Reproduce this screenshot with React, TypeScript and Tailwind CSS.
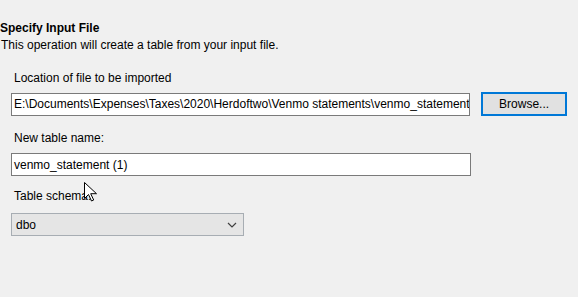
export default function App() {
  return (
    <div className="relative h-[297px] w-[578px] overflow-hidden bg-[#f0f0f0] text-[12px] leading-[16px] text-black [font-family:'Segoe_UI','Liberation_Sans',sans-serif]">
      <div className="pt-[20px]">
        <h2 className="font-bold">Specify Input File</h2>
        <p className="mt-[1px] pl-px">This operation will create a table from your input file.</p>
      </div>

      <div className="mt-[17px] px-[11px]">
        <label className="block pl-[3px]">Location of file to be imported</label>
        <div className="mt-[6px] flex items-center gap-[11px]">
          <div className="flex h-[23px] w-[460px] items-center overflow-hidden whitespace-nowrap border border-[#7a7a7a] bg-white pl-[2px]">
            <span className="shrink-0">E:\Documents\Expenses\Taxes\2020\Herdoftwo\Venmo statements\venmo_statement</span>
          </div>
          <button
            type="button"
            className="h-[24px] w-[86px] border-2 border-[#0078d7] bg-[#e1e1e1] text-center"
          >
            Browse...
          </button>
        </div>

        <label className="mt-[14px] block pl-[3px]">New table name:</label>
        <div className="mt-[7px] flex h-[23px] w-[460px] items-center border border-[#7a7a7a] bg-white pl-[2px]">
          venmo_statement (1)
        </div>

        <label className="mt-[12px] block pl-[3px]">Table schema:</label>
        <div className="mt-[9px] flex h-[23px] w-[233px] items-center justify-between border border-[#a7adb3] bg-[#e5e5e5] pl-[4px] pr-[6px]">
          <span>dbo</span>
          <svg width="10" height="6" viewBox="0 0 10 6" fill="none" stroke="#404040" strokeWidth="1.2">
            <path d="M1 1l4 4 4-4" />
          </svg>
        </div>
      </div>

      <svg
        className="absolute left-[84px] top-[182px]"
        width="13"
        height="20"
        viewBox="0 0 13 20"
      >
        <path d="M0.5 0.5v16l4-4 3 6.5 2.2-1-3-6.3h5.8z" fill="white" stroke="black" strokeWidth="1" />
      </svg>
    </div>
  );
}
